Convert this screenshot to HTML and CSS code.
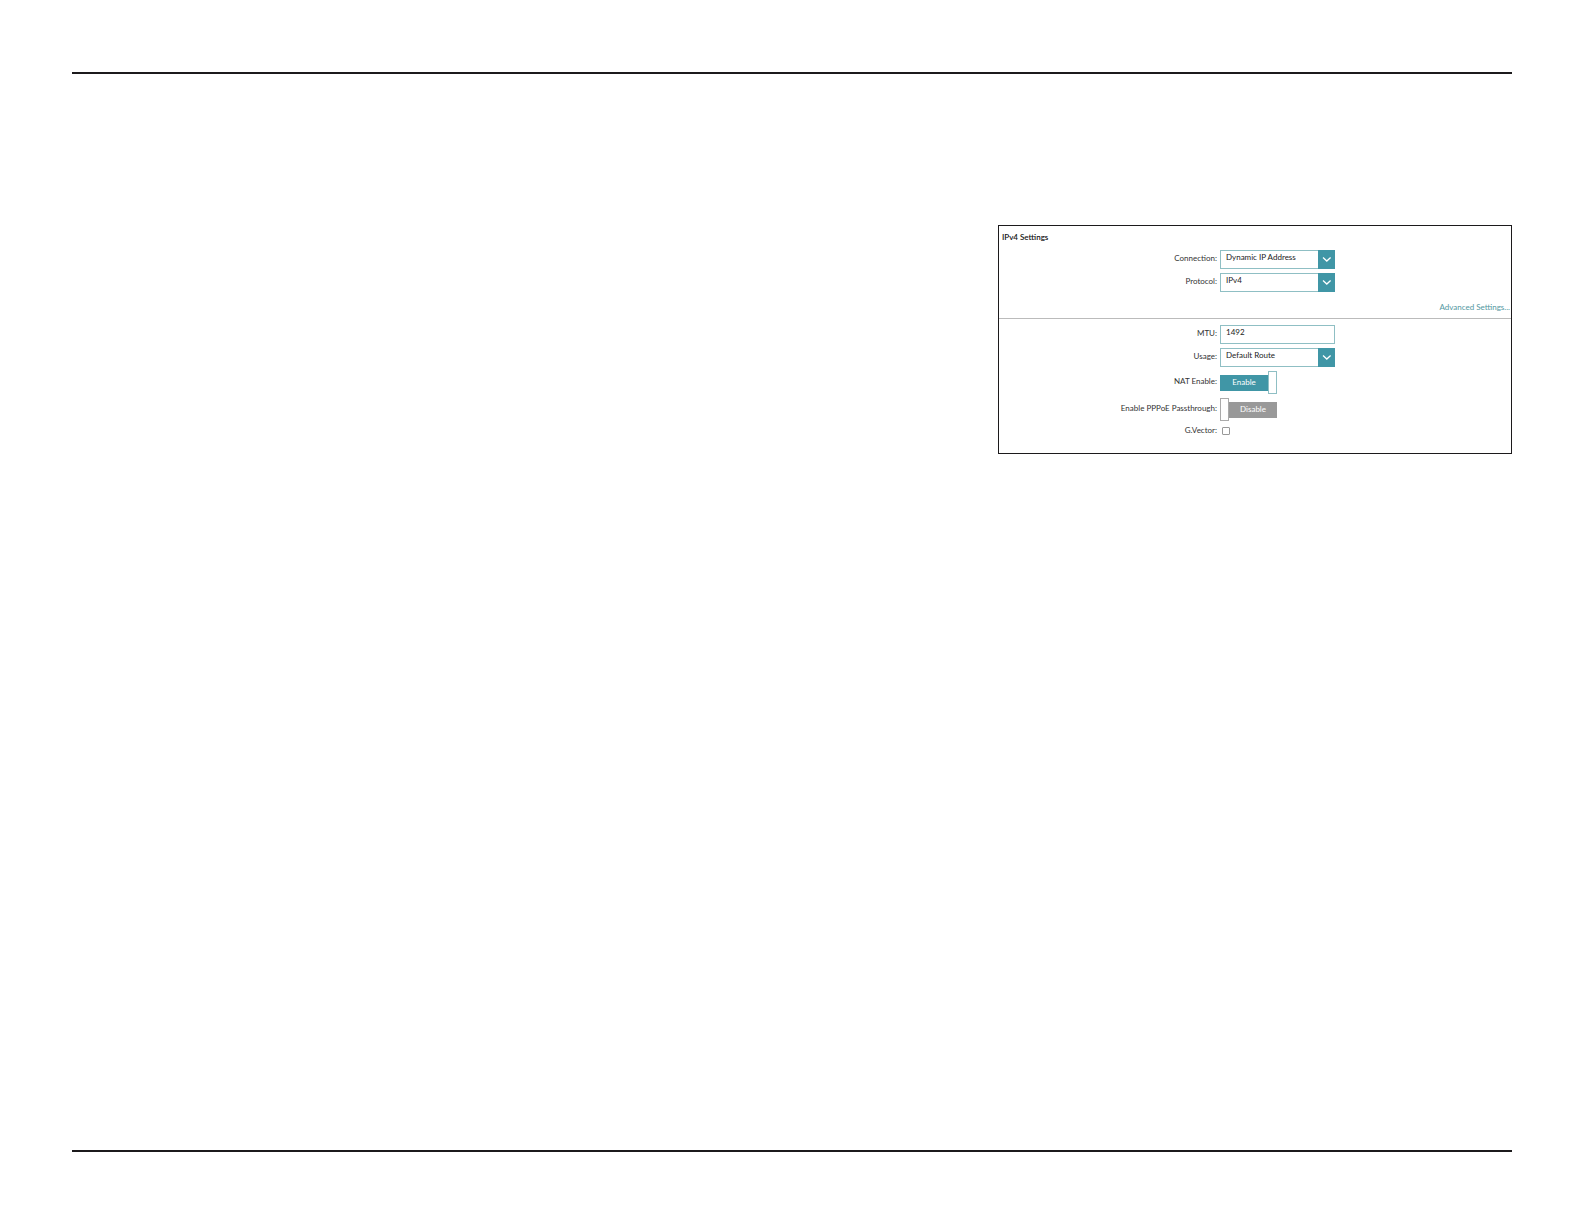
FILE: index.html
```html
<!DOCTYPE html>
<html lang="en">
<head>
<meta charset="utf-8">
<meta name="viewport" content="width=device-width, initial-scale=1">
<title>IPv4 Settings</title>
<link rel="stylesheet" href="styles.css">
</head>
<body class="page">
<main class="sheet">
  <form class="panel">
    <h1 class="title">IPv4 Settings</h1>
    <div class="fields">
      <div class="field">
        <label class="label" for="connection">Connection:</label>
        <div class="dropdown">
          <select class="box" id="connection"><option>Dynamic IP Address</option></select>
          <svg class="chevron" viewBox="0 0 17 19" aria-hidden="true"><path d="M5 7.5 8.8 11 12.6 7.5"/></svg>
        </div>
      </div>
      <div class="field">
        <label class="label" for="protocol">Protocol:</label>
        <div class="dropdown">
          <select class="box" id="protocol"><option>IPv4</option></select>
          <svg class="chevron" viewBox="0 0 17 19" aria-hidden="true"><path d="M5 7.5 8.8 11 12.6 7.5"/></svg>
        </div>
      </div>
    </div>
    <div class="more"><a class="link" href="#advanced">Advanced Settings...</a></div>
    <div class="fields advanced" id="advanced">
      <div class="field">
        <label class="label" for="mtu">MTU:</label>
        <input class="box" id="mtu" type="text" value="1492">
      </div>
      <div class="field">
        <label class="label" for="usage">Usage:</label>
        <div class="dropdown">
          <select class="box" id="usage"><option>Default Route</option></select>
          <svg class="chevron" viewBox="0 0 17 19" aria-hidden="true"><path d="M5 7.5 8.8 11 12.6 7.5"/></svg>
        </div>
      </div>
      <div class="field">
        <label class="label" for="nat">NAT Enable:</label>
        <button class="switch on" id="nat" type="button" role="switch" aria-checked="true"><span class="state">Enable</span><span class="handle"></span></button>
      </div>
      <div class="field">
        <label class="label" for="pppoe">Enable PPPoE Passthrough:</label>
        <button class="switch" id="pppoe" type="button" role="switch" aria-checked="false"><span class="handle"></span><span class="state">Disable</span></button>
      </div>
      <div class="field">
        <label class="label" for="gvector">G.Vector:</label>
        <input class="check" id="gvector" type="checkbox">
      </div>
    </div>
  </form>
</main>
</body>
</html>
```
FILE: styles.css
```css
* {
  box-sizing: border-box;
}

.page {
  display: flex;
  min-height: 100vh;
  margin: 0;
  padding: 72px;
  background: #fff;
  color: #333;
  font: 8px/10px Lato, "Open Sans", sans-serif;
}

.sheet {
  flex: 1;
  display: grid;
  grid-template-columns: 926fr 514fr;
  align-items: start;
  padding-top: 151px;
  border-top: 2px solid #1c1a1c;
  border-bottom: 2px solid #1c1a1c;
}

.panel {
  grid-column: 2;
  padding-bottom: 14px;
  border: 1px solid #1c1a1c;
}

.title {
  margin: 0;
  padding: 6px 3px 8px;
  color: #111;
  font-size: 8px;
  font-weight: 600;
  line-height: 10px;
}

.fields {
  display: grid;
  gap: 4px;
}

.field {
  display: grid;
  grid-template-columns: 218fr 291fr;
  column-gap: 3px;
  align-items: center;
}

.label {
  padding-bottom: 4px;
  text-align: right;
}

.dropdown {
  display: grid;
  width: 115px;
}

.box {
  grid-area: 1 / 1;
  width: 115px;
  height: 19px;
  margin: 0;
  padding: 0 5px 5px;
  appearance: none;
  border: 1px solid #8fbfc4;
  border-radius: 0;
  background: #fff;
  color: #222;
  font: inherit;
}

.field > .box {
  grid-area: auto;
}

.chevron {
  grid-area: 1 / 1;
  justify-self: end;
  width: 17px;
  height: 19px;
  background: #4096a6;
  fill: none;
  stroke: #fff;
  stroke-width: 1.3;
  pointer-events: none;
}

.more {
  display: flex;
  justify-content: flex-end;
  padding: 10px 1px 6px;
  border-bottom: 1px solid #bbb;
}

.link {
  color: #53989f;
  text-decoration: none;
}

.advanced {
  padding-top: 6px;
}

.switch {
  display: flex;
  align-items: center;
  width: 57px;
  height: 23px;
  padding: 0;
  border: 0;
  background: none;
  color: #fff;
  font: inherit;
}

.state {
  flex: 1;
  padding-bottom: 2px;
  background: #999;
  line-height: 14px;
  text-align: center;
}

.on .state {
  background: #4096a6;
}

.handle {
  width: 9px;
  height: 23px;
  border: 1px solid #aaa;
  background: #fff;
}

.on .handle {
  border-color: #8fbfc4;
}

.check {
  align-self: start;
  width: 8px;
  height: 8px;
  margin: 2px 2px 0;
  appearance: none;
  border: 1px solid #999;
  border-radius: 1px;
  background: #fff;
}

.check:checked {
  background: #4096a6;
}
```
